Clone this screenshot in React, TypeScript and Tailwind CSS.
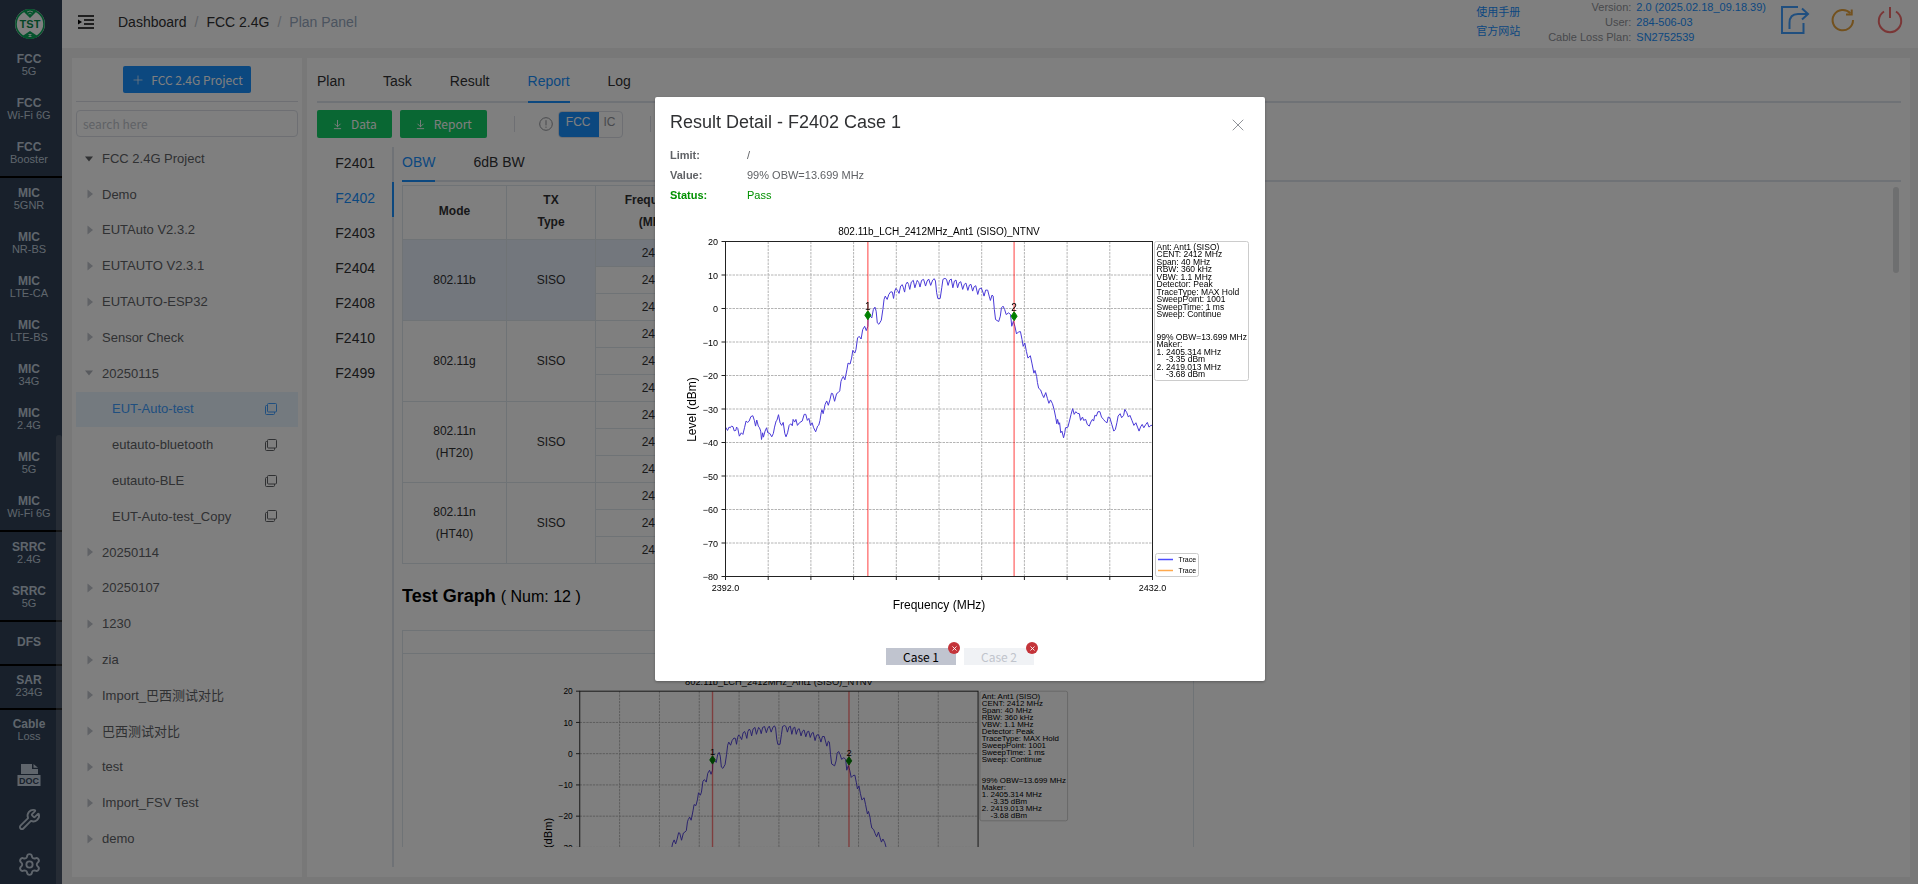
import React from 'react';
import { ArrowDownToLine, Plus, Settings, Wrench, X } from 'lucide-react';

interface NavItem {
  title: string;
  sub?: string;
  divider?: boolean;
  compact?: boolean;
}

const NAV_ITEMS: NavItem[] = [
  { title: 'FCC', sub: '5G' },
  { title: 'FCC', sub: 'Wi-Fi 6G' },
  { title: 'FCC', sub: 'Booster', divider: true },
  { title: 'MIC', sub: '5GNR' },
  { title: 'MIC', sub: 'NR-BS' },
  { title: 'MIC', sub: 'LTE-CA' },
  { title: 'MIC', sub: 'LTE-BS' },
  { title: 'MIC', sub: '34G' },
  { title: 'MIC', sub: '2.4G' },
  { title: 'MIC', sub: '5G' },
  { title: 'MIC', sub: 'Wi-Fi 6G', divider: true },
  { title: 'SRRC', sub: '2.4G' },
  { title: 'SRRC', sub: '5G', divider: true },
  { title: 'DFS', divider: true, compact: true },
  { title: 'SAR', sub: '234G', divider: true, compact: true },
  { title: 'Cable', sub: 'Loss', compact: true },
];

interface TreeNode {
  label: string;
  kind: 'root' | 'open' | 'closed' | 'leaf';
  active?: boolean;
}

const TREE: TreeNode[] = [
  { label: 'FCC 2.4G Project', kind: 'root' },
  { label: 'Demo', kind: 'closed' },
  { label: 'EUTAuto V2.3.2', kind: 'closed' },
  { label: 'EUTAUTO V2.3.1', kind: 'closed' },
  { label: 'EUTAUTO-ESP32', kind: 'closed' },
  { label: 'Sensor Check', kind: 'closed' },
  { label: '20250115', kind: 'open' },
  { label: 'EUT-Auto-test', kind: 'leaf', active: true },
  { label: 'eutauto-bluetooth', kind: 'leaf' },
  { label: 'eutauto-BLE', kind: 'leaf' },
  { label: 'EUT-Auto-test_Copy', kind: 'leaf' },
  { label: '20250114', kind: 'closed' },
  { label: '20250107', kind: 'closed' },
  { label: '1230', kind: 'closed' },
  { label: 'zia', kind: 'closed' },
  { label: 'Import_巴西测试对比', kind: 'closed' },
  { label: '巴西测试对比', kind: 'closed' },
  { label: 'test', kind: 'closed' },
  { label: 'Import_FSV Test', kind: 'closed' },
  { label: 'demo', kind: 'closed' },
];

const MAIN_TABS = ['Plan', 'Task', 'Result', 'Report', 'Log'];
const CASES = ['F2401', 'F2402', 'F2403', 'F2404', 'F2408', 'F2410', 'F2499'];

const MODES = [
  { mode: ['802.11b'], type: 'SISO', freqs: [2412, 2437, 2462] },
  { mode: ['802.11g'], type: 'SISO', freqs: [2412, 2437, 2462] },
  { mode: ['802.11n', '(HT20)'], type: 'SISO', freqs: [2412, 2437, 2462] },
  { mode: ['802.11n', '(HT40)'], type: 'SISO', freqs: [2422, 2437, 2452] },
];

// "step,level" pairs: step 0..1080 across the span, level in tenths of a dBm
const TRACE =
  '0,-354 5,-364 9,-354 12,-356 15,-351 19,-353 22,-365 26,-364 28,-354 31,-358 35,-381 40,-371 44,-376 48,-356 52,-336 56,-340 60,-336 64,-323 69,-320 73,-334 76,-351 79,-333 83,-351 86,-356 89,-366 91,-391 94,-371 96,-384 100,-366 104,-356 107,-371 112,-373 117,-383 121,-373 124,-354 128,-336 130,-334 134,-317 138,-341 142,-349 146,-340 150,-373 153,-383 157,-371 161,-349 165,-344 169,-350 171,-331 175,-339 178,-331 182,-349 187,-341 194,-336 199,-316 203,-316 207,-334 211,-328 215,-349 219,-341 223,-356 228,-368 233,-351 236,-348 239,-334 242,-311 244,-302 247,-314 252,-286 256,-276 260,-289 264,-273 268,-253 271,-254 276,-277 281,-254 285,-251 289,-246 292,-218 ' +
  '294,-211 298,-203 302,-213 307,-183 310,-163 315,-166 319,-148 322,-125 327,-133 330,-123 334,-88 338,-83 343,-91 347,-63 352,-53 356,-66 360,-53 361,-13 365,-21 370,-28 374,-3 378,4 381,-8 384,-43 388,-47 394,-35 398,-3 401,27 404,37 409,27 413,42 418,50 422,49 425,30 428,52 431,60 435,54 439,45 443,67 447,71 450,62 453,49 456,72 460,79 463,72 466,57 470,79 475,84 479,62 483,77 485,84 489,77 492,64 496,84 501,87 506,67 510,82 514,88 519,69 524,85 528,89 531,82 534,47 537,30 543,30 547,62 550,87 555,90 559,87 563,69 567,85 571,88 575,62 579,82 583,85 587,62 591,77 595,80 600,57 604,72 608,76 613,54 617,70 621,72 625,52 629,65 633,68 638,42 642,59 647,61 651,49 654,37 658,55 663,55 667,37 670,24 674,40 677,37 680,-3 683,-33 691,-39 695,-23 698,2 702,7 706,-3 710,-18 716,-13 721,-18 724,-53 728,-38 732,-53 736,-76 741,-70 746,-69 750,-93 753,-113 757,-103 761,-128 765,-148 771,-141 775,-163 780,-193 783,-185 787,-203 789,-221 ' +
  '792,-238 797,-243 801,-256 805,-266 810,-251 814,-268 818,-283 822,-273 827,-284 831,-301 835,-324 838,-344 840,-331 843,-346 845,-341 848,-371 851,-366 855,-386 858,-371 860,-356 866,-354 870,-336 874,-316 878,-299 882,-316 886,-308 890,-313 895,-314 898,-334 903,-324 906,-334 911,-331 915,-346 920,-351 924,-339 928,-331 931,-336 934,-319 938,-321 942,-308 947,-308 951,-324 956,-331 961,-338 965,-341 968,-324 972,-326 977,-346 982,-366 986,-361 990,-341 993,-321 998,-314 1002,-326 1007,-319 1010,-301 1015,-311 1019,-324 1023,-319 1028,-334 1033,-349 1038,-341 1042,-354 1046,-366 1050,-353 1054,-346 1058,-356 1063,-346 1067,-340 1071,-354 1076,-349 1080,-349';

const PLOT = { left: 111, right: 965, top: 69, bottom: 739 };
const xOf = (step: number) => PLOT.left + (step * (PLOT.right - PLOT.left)) / 1080;
const yOf = (level: number) => PLOT.top + ((200 - level) * (PLOT.bottom - PLOT.top)) / 1000;

const TRACE_POINTS = TRACE.split(' ')
  .map((pair) => {
    const [step, level] = pair.split(',').map(Number);
    return `${xOf(step).toFixed(1)},${yOf(level).toFixed(1)}`;
  })
  .join(' ');

const CHART_INFO = [
  'Ant: Ant1 (SISO)',
  'CENT: 2412 MHz',
  'Span: 40 MHz',
  'RBW: 360 kHz',
  'VBW: 1.1 MHz',
  'Detector: Peak',
  'TraceType: MAX Hold',
  'SweepPoint: 1001',
  'SweepTime: 1 ms',
  'Sweep: Continue',
  '',
  '',
  '99% OBW=13.699 MHz',
  'Maker:',
  '1. 2405.314 MHz',
  '    -3.35 dBm',
  '2. 2419.013 MHz',
  '    -3.68 dBm',
];

const MARKERS = [
  { id: '1', step: 360, level: -20 },
  { id: '2', step: 730, level: -23 },
];

function SpectrumChart({ className }: { className?: string }) {
  const levels = [20, 10, 0, -10, -20, -30, -40, -50, -60, -70, -80];
  const columns = [0, 1, 2, 3, 4, 5, 6, 7, 8, 9, 10];

  return (
    <svg
      viewBox="0 0 1160 870"
      className={className}
      fontFamily='"Liberation Sans", Arial, sans-serif'
      role="img"
      aria-label="802.11b_LCH_2412MHz_Ant1 (SISO)_NTNV"
    >
      <text x="538" y="56" fontSize="20" textAnchor="middle">
        802.11b_LCH_2412MHz_Ant1 (SISO)_NTNV
      </text>

      <g stroke="#b4b4b4" strokeWidth="2" strokeDasharray="5 2">
        {levels.slice(1, -1).map((v) => (
          <line key={v} x1={PLOT.left} x2={PLOT.right} y1={yOf(v * 10)} y2={yOf(v * 10)} />
        ))}
        {columns.slice(1, -1).map((c) => (
          <line key={c} x1={xOf(c * 108)} x2={xOf(c * 108)} y1={PLOT.top} y2={PLOT.bottom} />
        ))}
      </g>

      <polyline points={TRACE_POINTS} fill="none" stroke="#4a3ad8" strokeWidth="2" strokeLinejoin="round" />

      {MARKERS.map((m) => (
        <line
          key={m.id}
          x1={xOf(m.step)}
          x2={xOf(m.step)}
          y1={PLOT.top}
          y2={PLOT.bottom}
          stroke="#ff0000"
          strokeOpacity="0.5"
          strokeWidth="3"
        />
      ))}

      <rect
        x={PLOT.left}
        y={PLOT.top}
        width={PLOT.right - PLOT.left}
        height={PLOT.bottom - PLOT.top}
        fill="none"
        stroke="#222222"
        strokeWidth="2"
      />

      {levels.map((v) => (
        <g key={v}>
          <line x1={PLOT.left - 8} x2={PLOT.left} y1={yOf(v * 10)} y2={yOf(v * 10)} stroke="#222222" strokeWidth="2" />
          <text x="96" y={yOf(v * 10) + 7} fontSize="18" textAnchor="end">
            {String(v).replace('-', '−')}
          </text>
        </g>
      ))}
      {columns.map((c) => (
        <line
          key={c}
          x1={xOf(c * 108)}
          x2={xOf(c * 108)}
          y1={PLOT.bottom}
          y2={PLOT.bottom + 7}
          stroke="#222222"
          strokeWidth="2"
        />
      ))}
      <text x={PLOT.left} y="767" fontSize="18" textAnchor="middle">
        2392.0
      </text>
      <text x={PLOT.right} y="767" fontSize="18" textAnchor="middle">
        2432.0
      </text>
      <text x="538" y="804" fontSize="24" textAnchor="middle">
        Frequency (MHz)
      </text>
      <text transform="translate(51 405) rotate(-90)" fontSize="24" textAnchor="middle">
        Level (dBm)
      </text>

      {MARKERS.map((m) => {
        const x = xOf(m.step);
        const y = yOf(m.level);
        return (
          <g key={m.id}>
            <path d={`M${x} ${y - 9} L${x + 6} ${y} L${x} ${y + 9} L${x - 6} ${y} Z`} fill="#008000" stroke="#008000" strokeWidth="2" />
            <text x={x} y={y - 11} fontSize="20" textAnchor="middle">
              {m.id}
            </text>
          </g>
        );
      })}

      <rect x="969" y="69" width="188" height="278" rx="4" fill="#ffffff" stroke="#cccccc" strokeWidth="2" />
      {CHART_INFO.map((line, i) => (
        <text key={i} x="973" y={85 + i * 15} fontSize="17" xmlSpace="preserve">
          {line}
        </text>
      ))}

      <rect x="971" y="693" width="86" height="46" rx="4" fill="#ffffff" stroke="#cccccc" strokeWidth="2" />
      <line x1="976" x2="1006" y1="705" y2="705" stroke="#4d4dff" strokeWidth="3" />
      <line x1="976" x2="1006" y1="727" y2="727" stroke="#ffa94d" strokeWidth="3" />
      <text x="1017" y="710" fontSize="14">
        Trace
      </text>
      <text x="1017" y="732" fontSize="14">
        Trace
      </text>
    </svg>
  );
}

function Logo() {
  return (
    <svg viewBox="0 0 32 32" className="h-8 w-8">
      <defs>
        <clipPath id="logo-disc">
          <circle cx="16" cy="16" r="15" />
        </clipPath>
      </defs>
      <circle cx="16" cy="16" r="15" fill="#ffffff" />
      <g clipPath="url(#logo-disc)" fill="#0aa65a">
        <path d="M4 0 H28 L22 4 L16 10 L10 4 Z" />
        <path d="M4 32 L10 27 L16 23 L22 27 L28 32 Z" />
      </g>
      <circle cx="16" cy="16" r="14" fill="none" stroke="#0aa65a" strokeWidth="1.6" />
      <path d="M13 4 Q16 2 19 4 M14.5 6 Q16 5 17.5 6" fill="none" stroke="#ffffff" strokeWidth="0.8" />
      <path d="M14.5 26.5 h3 M14.5 28.5 h3 M16 26 v3" fill="none" stroke="#ffffff" strokeWidth="0.8" />
      <text
        x="16"
        y="19.8"
        fontSize="11"
        fontWeight="700"
        textAnchor="middle"
        fill="#0a8a4c"
        fontFamily='"Liberation Sans", Arial, sans-serif'
      >
        TST
      </text>
    </svg>
  );
}

function DocIcon() {
  return (
    <svg viewBox="0 0 24 24" className="h-6 w-6">
      <path d="M4 11 V1 H15 V6 H21 V11 Z M16.5 1 L21 4.8 H16.5 Z" fill="#bfcbd9" />
      <rect x="0.5" y="12" width="23" height="11" fill="#bfcbd9" />
      <text
        x="12"
        y="20.6"
        fontSize="9"
        fontWeight="700"
        textAnchor="middle"
        fill="#304156"
        fontFamily='"Liberation Sans", Arial, sans-serif'
      >
        DOC
      </text>
    </svg>
  );
}

function CopyIcon() {
  return (
    <svg viewBox="0 0 12 12" className="h-3 w-3" fill="none" stroke="currentColor" strokeWidth="1">
      <rect x="2.5" y="0.5" width="9" height="8.5" rx="1" />
      <path d="M2.5 2.5 H1.5 a1 1 0 0 0 -1 1 V10.5 a1 1 0 0 0 1 1 H8.5 a1 1 0 0 0 1 -1 V9" />
    </svg>
  );
}

function Sidebar() {
  return (
    <nav className="relative h-screen w-[62px] shrink-0 overflow-hidden bg-[#304156] text-[#bfcbd9]">
      <div className="flex h-11 justify-center pt-2 pr-0.5">
        <Logo />
      </div>
      <ul>
        {NAV_ITEMS.map((item, i) => (
          <li
            key={i}
            className={`box-content ${item.compact ? 'h-[42px]' : 'h-11'} ${
              item.divider ? 'border-b-2 border-black' : ''
            }`}
          >
            <a href="#" className="flex h-full flex-col items-center justify-center pr-1 pb-0.5">
              <span className="text-xs leading-3 font-bold">{item.title}</span>
              {item.sub && <span className="text-[11px] leading-3">{item.sub}</span>}
            </a>
          </li>
        ))}
        <li>
          <a href="#" aria-label="Documents" className="flex h-[45px] items-center justify-center pr-1">
            <DocIcon />
          </a>
        </li>
        <li>
          <a href="#" aria-label="Tools" className="flex h-[45px] items-center justify-center pr-1">
            <Wrench size={23} strokeWidth={1.9} />
          </a>
        </li>
        <li>
          <a href="#" aria-label="Settings" className="flex h-[45px] items-center justify-center pr-1">
            <Settings size={25} strokeWidth={1.8} />
          </a>
        </li>
      </ul>
      <div className="absolute right-0 bottom-0 h-[449px] w-1.5 rounded-t-full bg-[#909399]/30" />
    </nav>
  );
}

function Header() {
  return (
    <header className="flex h-12 shrink-0 items-center bg-white pr-3.5 pb-1 pl-4">
      <button type="button" aria-label="Toggle sidebar">
        <svg viewBox="0 0 16 14" className="h-3.5 w-4" fill="none" stroke="#000000" strokeWidth="1.4">
          <path d="M0 1 H16 M6 5 H16 M6 9 H16 M0 13 H16" />
          <path d="M0 4.5 L4 7 L0 9.5 Z" fill="#000000" stroke="none" />
        </svg>
      </button>
      <div className="ml-6 flex items-center gap-2 text-sm text-[#303133]">
        <a href="#">Dashboard</a>
        <span className="text-[#c0c4cc]">/</span>
        <a href="#">FCC 2.4G</a>
        <span className="text-[#c0c4cc]">/</span>
        <span className="text-[#97a8be]">Plan Panel</span>
      </div>

      <div className="ml-auto flex flex-col text-[11px] leading-[19px] text-[#1890ff]">
        <a href="#">使用手册</a>
        <a href="#">官方网站</a>
      </div>
      <dl className="ml-7 grid grid-cols-[auto_auto] gap-x-[5px] text-[11px] leading-[15px] text-[#1890ff]">
        <dt className="text-right text-[#909399]">Version:</dt>
        <dd>2.0 (2025.02.18_09.18.39)</dd>
        <dt className="text-right text-[#909399]">User:</dt>
        <dd>284-506-03</dd>
        <dt className="text-right text-[#909399]">Cable Loss Plan:</dt>
        <dd>SN2752539</dd>
      </dl>
      <div className="mb-1 ml-3.5 flex items-center gap-5">
        <button type="button" aria-label="Export">
          <svg viewBox="0 0 30 30" className="h-[30px] w-[30px]" fill="none" stroke="#409eff" strokeWidth="2">
            <path d="M18 2 H2 V28 H23.5 V18" />
            <path d="M9.5 24 V18 Q9.5 9 18 9 H28" />
            <path d="M22 3.5 L28 9 L22 14.5" />
          </svg>
        </button>
        <button type="button" aria-label="Refresh">
          <svg viewBox="0 0 26 26" className="h-[26px] w-[26px]" fill="none" stroke="#e6a23c" strokeWidth="2">
            <path d="M23 13 A10.2 10.2 0 1 1 20.4 6.3" />
            <path d="M21.7 2.5 V7.6 H16" />
          </svg>
        </button>
        <button type="button" aria-label="Log out">
          <svg viewBox="0 0 28 28" className="h-7 w-7" fill="none" stroke="#f56c6c" strokeWidth="2">
            <path d="M8 5.5 A11.2 11.2 0 1 0 20 5.5" />
            <path d="M14 1 V12" />
          </svg>
        </button>
      </div>
    </header>
  );
}

function Caret({ kind }: { kind: TreeNode['kind'] }) {
  if (kind === 'closed') {
    return (
      <svg viewBox="0 0 10 10" className="h-2.5 w-2.5">
        <path d="M3.5 0.5 L9 5 L3.5 9.5 Z" fill="#c0c4cc" />
      </svg>
    );
  }
  return (
    <svg viewBox="0 0 10 10" className="h-2.5 w-2.5">
      <path d="M1 2.5 H9 L5 7.5 Z" fill={kind === 'root' ? '#606266' : '#b0b4bc'} />
    </svg>
  );
}

function ProjectPanel() {
  return (
    <aside className="flex w-[230px] shrink-0 flex-col bg-white px-1 pt-2 pb-5">
      <button
        type="button"
        className="mx-auto flex h-[27px] items-center gap-1.5 rounded-xs bg-[#1890ff] px-2 font-['Noto_Sans_CJK_SC',sans-serif] text-xs text-white"
      >
        <Plus size={14} strokeWidth={1.2} />
        FCC 2.4G Project
      </button>
      <hr className="mt-2 border-[#dcdfe6]" />
      <input
        type="text"
        aria-label="Search projects"
        placeholder="search here"
        className="mt-2 h-[27px] rounded border border-[#dcdfe6] px-1.5 font-['Noto_Sans_CJK_SC',sans-serif] text-xs placeholder:text-[#c0c4cc]"
      />
      <ul className="mt-1 flex flex-1 flex-col text-[13px] text-[#606266]">
        {TREE.map((node) => (
          <li key={node.label} className="flex-1">
            {node.kind === 'leaf' ? (
              <div
                className={`flex h-[35px] items-center justify-between pr-[21px] pl-9 ${
                  node.active ? 'bg-[#e8f4ff] text-[#409eff]' : ''
                }`}
              >
                <a href="#">{node.label}</a>
                <button type="button" aria-label={`Copy ${node.label}`}>
                  <CopyIcon />
                </button>
              </div>
            ) : (
              <a href="#" className="flex h-[35px] items-center gap-2 pl-2">
                <Caret kind={node.kind} />
                {node.label}
              </a>
            )}
          </li>
        ))}
      </ul>
    </aside>
  );
}

function ResultTable() {
  return (
    <table className="border-collapse text-center text-xs leading-[22px] text-[#303133]">
      <thead>
        <tr className="h-[54px]">
          <th className="w-[104px] border border-[#dfe6ec] pb-1">Mode</th>
          <th className="w-[89px] border border-[#dfe6ec] pb-1">
            TX
            <br />
            Type
          </th>
          <th className="w-[119px] border border-[#dfe6ec] pb-1">
            Frequency
            <br />
            (MHz)
          </th>
        </tr>
      </thead>
      <tbody>
        {MODES.map((row, r) =>
          row.freqs.map((freq, i) => (
            <tr key={`${r}-${i}`} className={`h-[27px] ${r === 0 && i === 0 ? 'bg-[#e6effb]' : ''}`}>
              {i === 0 && (
                <>
                  <td rowSpan={3} className="border border-[#dfe6ec]">
                    {row.mode.map((line) => (
                      <div key={line}>{line}</div>
                    ))}
                  </td>
                  <td rowSpan={3} className="border border-[#dfe6ec]">
                    {row.type}
                  </td>
                </>
              )}
              <td className="border border-[#dfe6ec]">{freq}</td>
            </tr>
          ))
        )}
      </tbody>
    </table>
  );
}

function ReportPanel() {
  return (
    <main className="flex min-w-0 flex-1 flex-col bg-white pt-2 pr-[9px] pb-2.5 pl-2.5">
      <div className="flex h-[37px] shrink-0 gap-[38px] border-b-2 border-[#dfe4ed] text-sm text-[#303133]">
        {MAIN_TABS.map((tab) => (
          <button
            key={tab}
            type="button"
            className={`-mb-0.5 border-b-2 pb-1.5 ${
              tab === 'Report' ? 'border-[#1890ff] text-[#1890ff]' : 'border-transparent'
            }`}
          >
            {tab}
          </button>
        ))}
      </div>

      <div className="mt-[7px] flex h-7 shrink-0 items-center">
        <button
          type="button"
          className="flex h-7 items-center gap-2 rounded-xs bg-[#13ce66] px-[15px] font-['Noto_Sans_CJK_SC',sans-serif] text-xs text-white"
        >
          <ArrowDownToLine size={11} strokeWidth={2} />
          Data
        </button>
        <button
          type="button"
          className="ml-2 flex h-7 items-center gap-2 rounded-xs bg-[#13ce66] px-[15px] font-['Noto_Sans_CJK_SC',sans-serif] text-xs text-white"
        >
          <ArrowDownToLine size={11} strokeWidth={2} />
          Report
        </button>
        <span className="ml-[27px] h-4 w-px bg-[#dcdfe6]" />
        <svg viewBox="0 0 14 14" className="ml-6 h-3.5 w-3.5" fill="none" stroke="#909399">
          <circle cx="7" cy="7" r="6.3" />
          <path d="M7 3.2 V8.4 M7 9.6 V10.8" />
        </svg>
        <div className="ml-[5px] flex h-[27px] overflow-hidden rounded border border-[#dcdfe6] text-xs">
          <button type="button" className="-m-px bg-[#1890ff] px-2 pb-1 text-white">
            FCC
          </button>
          <button type="button" className="px-1.5 pb-1 text-[#909399]">
            IC
          </button>
        </div>
        <span className="ml-[27px] h-4 w-px bg-[#dcdfe6]" />
      </div>

      <div className="mt-[9px] flex min-h-0 flex-1">
        <div className="flex w-[77px] shrink-0 flex-col border-r-2 border-[#dfe4ed] text-sm text-[#303133]">
          {CASES.map((name) => (
            <button
              key={name}
              type="button"
              className={`-mr-0.5 h-[35px] border-r-2 pr-[17px] pb-1 text-right ${
                name === 'F2402' ? 'border-[#1890ff] text-[#1890ff]' : 'border-transparent'
              }`}
            >
              {name}
            </button>
          ))}
        </div>

        <div className="mb-5 ml-2 flex min-w-0 flex-1 flex-col">
          <div className="flex h-[35px] shrink-0 gap-[38px] border-b-2 border-[#dfe4ed] text-sm text-[#303133]">
            <button type="button" className="-mb-0.5 border-b-2 border-[#1890ff] pb-1 text-[#1890ff]">
              OBW
            </button>
            <button type="button" className="pb-1">
              6dB BW
            </button>
          </div>
          <div className="relative mt-[3px] min-h-0 flex-1 overflow-hidden">
            <ResultTable />
            <h2 className="mt-[18px] text-lg font-bold text-black">
              Test Graph <span className="text-base font-normal">( Num: 12 )</span>
            </h2>
            <div className="mt-5 w-[792px] border border-[#dfe6ec]">
              <div className="h-[23px] border-b border-[#dfe6ec]" />
              <SpectrumChart className="mx-auto mt-[5px] w-[541px]" />
            </div>
            <div className="absolute top-0.5 right-0.5 h-[86px] w-1.5 rounded-full bg-[#909399]/30" />
          </div>
        </div>
      </div>
    </main>
  );
}

function CaseChip({ label, active }: { label: string; active?: boolean }) {
  return (
    <div className="relative">
      <button
        type="button"
        className={`flex h-[17px] w-[70px] items-center justify-center font-['Noto_Sans_CJK_SC',sans-serif] text-xs ${
          active ? 'bg-[#c0c4cf] text-black' : 'bg-[#f0f2f5] text-[#c0c4cc]'
        }`}
      >
        {label}
      </button>
      <button
        type="button"
        aria-label={`Remove ${label}`}
        className="absolute -top-1.5 -right-1 flex h-3 w-3 items-center justify-center rounded-full bg-[#c4343a] text-white"
      >
        <X size={7} strokeWidth={3} />
      </button>
    </div>
  );
}

function ResultDialog() {
  return (
    <div className="fixed inset-0 flex items-start justify-center bg-black/50">
      <div
        role="dialog"
        aria-label="Result Detail"
        className="mt-[11vh] ml-0.5 w-[610px] rounded-xs bg-white px-[15px] pb-4 shadow-[0_1px_3px_rgba(0,0,0,0.3)]"
      >
        <div className="flex items-center justify-between pt-3 pr-0.5">
          <h1 className="text-lg leading-[26px] text-[#303133]">Result Detail - F2402 Case 1</h1>
          <button type="button" aria-label="Close" className="mt-1.5 h-5 text-[#909399]">
            <X size={20} strokeWidth={1.2} />
          </button>
        </div>
        <dl className="mt-2.5 mb-0.5 grid grid-cols-[77px_auto] text-[11px] leading-5 text-[#606266]">
          <dt className="font-bold">Limit:</dt>
          <dd>/</dd>
          <dt className="font-bold">Value:</dt>
          <dd>99% OBW=13.699 MHz</dd>
          <dt className="font-bold text-[#009000]">Status:</dt>
          <dd className="text-[#009000]">Pass</dd>
        </dl>
        <SpectrumChart className="w-full" />
        <div className="mt-1.5 flex justify-center gap-2">
          <CaseChip label="Case 1" active />
          <CaseChip label="Case 2" />
        </div>
      </div>
    </div>
  );
}

export default function App() {
  return (
    <div className="flex h-screen overflow-hidden bg-[#f0f0f0] font-['Liberation_Sans','Noto_Sans_CJK_SC',sans-serif]">
      <Sidebar />
      <div className="flex min-w-0 flex-1 flex-col">
        <Header />
        <div className="flex min-h-0 flex-1 gap-[5px] pt-2.5 pr-2 pb-[7px] pl-2.5">
          <ProjectPanel />
          <ReportPanel />
        </div>
      </div>
      <ResultDialog />
    </div>
  );
}
